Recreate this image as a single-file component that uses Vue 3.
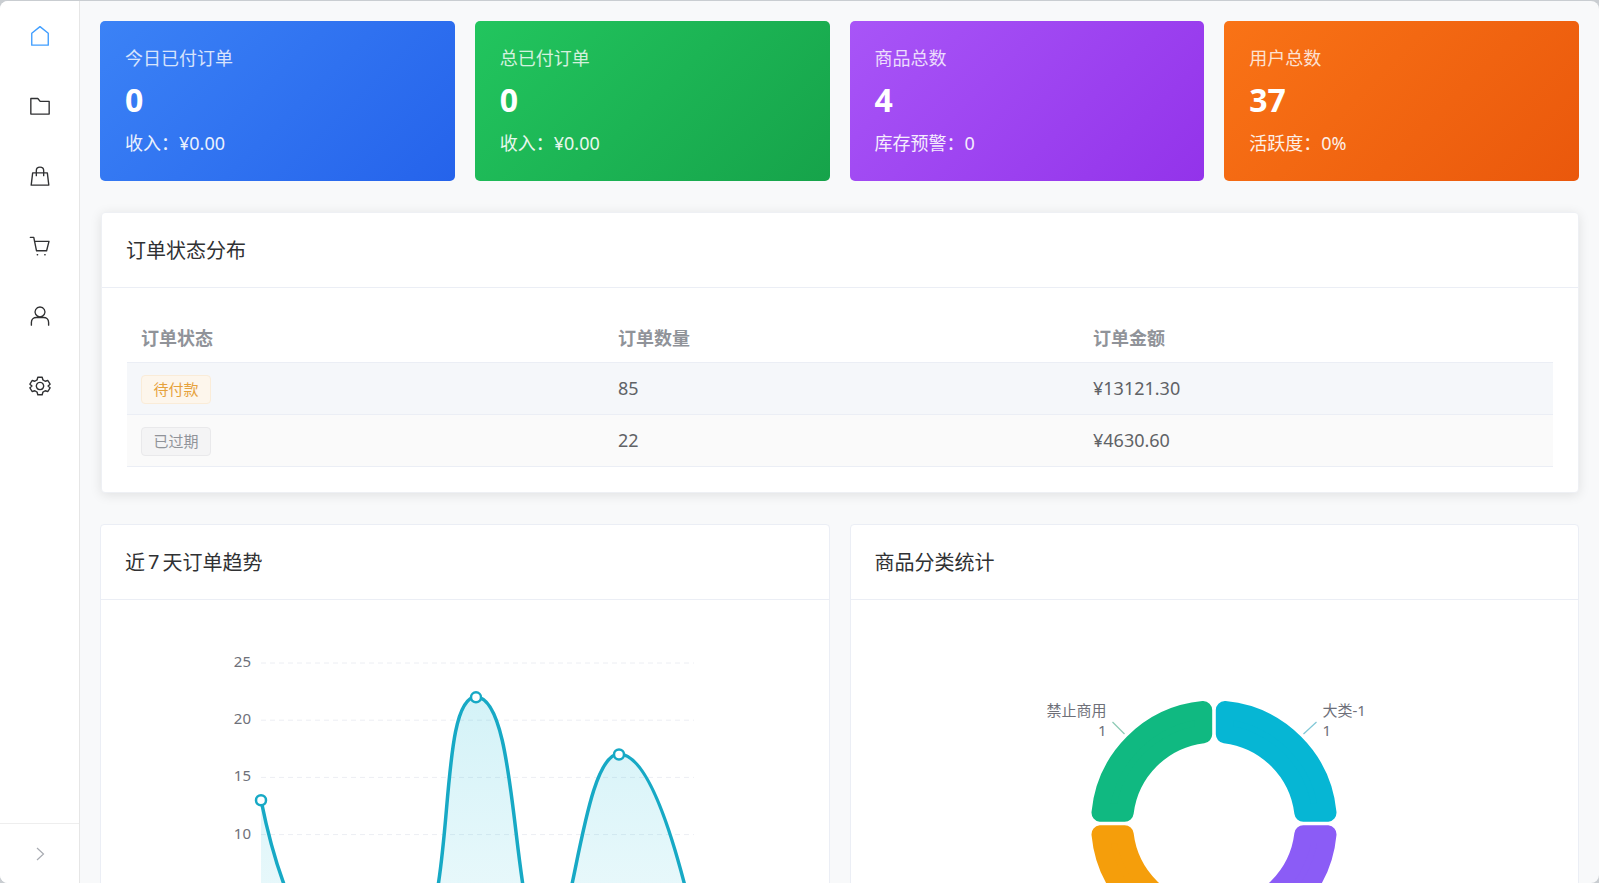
<template>
  <div class="shell">
    <aside class="sidebar">
      <nav class="nav">
        <a v-for="item in navItems" :key="item.name" class="nav-item" :class="{ active: item.active }">
          <svg viewBox="0 0 24 24" class="nav-icon" fill="none" stroke="currentColor" stroke-width="1.5" stroke-linejoin="round" stroke-linecap="round">
            <path v-for="(d, i) in item.paths" :key="i" :d="d" />
          </svg>
        </a>
      </nav>
      <div class="collapse">
        <svg viewBox="0 0 16 16" width="16" height="16" fill="none" stroke="#a8abb2" stroke-width="1.2">
          <path d="M5 2 l6.5 6 -6.5 6" />
        </svg>
      </div>
    </aside>

    <main class="main">
      <section class="stats">
        <div v-for="card in statCards" :key="card.title" class="stat" :class="card.tone">
          <div class="stat-title">{{ card.title }}</div>
          <div class="stat-value">{{ card.value }}</div>
          <div class="stat-sub">{{ card.sub }}</div>
        </div>
      </section>

      <section class="panel panel-shadow">
        <div class="panel-head">订单状态分布</div>
        <div class="panel-body">
          <div class="table">
            <div class="row row-head">
              <div class="cell">订单状态</div>
              <div class="cell">订单数量</div>
              <div class="cell">订单金额</div>
            </div>
            <div v-for="row in orderRows" :key="row.status" class="row" :class="row.rowClass">
              <div class="cell cell-tag"><span class="tag" :class="row.tagClass">{{ row.status }}</span></div>
              <div class="cell">{{ row.count }}</div>
              <div class="cell">{{ row.amount }}</div>
            </div>
          </div>
        </div>
      </section>

      <section class="charts">
        <div class="panel">
          <div class="panel-head">近<span class="head-num">7</span>天订单趋势</div>
          <svg class="chart" viewBox="101 600 727.5 420">
            <defs>
              <linearGradient id="areaFill" gradientUnits="userSpaceOnUse" x1="0" y1="680" x2="0" y2="950">
                <stop offset="0" stop-color="#06b6d4" stop-opacity="0.18" />
                <stop offset="1" stop-color="#06b6d4" stop-opacity="0.07" />
              </linearGradient>
            </defs>
            <g v-for="tick in yTicks" :key="tick.label">
              <line x1="261" x2="694" :y1="tick.y" :y2="tick.y" stroke="#eceef3" stroke-dasharray="5 4" />
              <text x="251" :y="tick.y + 4" text-anchor="end" class="axis-label">{{ tick.label }}</text>
            </g>
            <path :d="trendPath + ' L700 950 L261 950 Z'" fill="url(#areaFill)" />
            <path :d="trendPath" fill="none" stroke="#17a9c5" stroke-width="3.5" />
            <circle v-for="p in trendPoints" :key="p.x" :cx="p.x" :cy="p.y" r="5" fill="#fff" stroke="#17a9c5" stroke-width="2.5" />
          </svg>
        </div>
        <div class="panel">
          <div class="panel-head">商品分类统计</div>
          <svg class="chart" viewBox="850.5 600 727.5 420">
            <path v-for="seg in donutSegments" :key="seg.color" :d="seg.d" :fill="seg.color" :stroke="seg.color" :stroke-width="corner * 2" stroke-linejoin="round" />
            <path d="M1303 734 L1316 722" stroke="#7fc7d6" stroke-width="1.2" fill="none" />
            <path d="M1124 734 L1112 722" stroke="#8ccab5" stroke-width="1.2" fill="none" />
            <text x="1322" y="716" class="pie-label">大类-1</text>
            <text x="1322" y="736" class="pie-label">1</text>
            <text x="1106" y="716" text-anchor="end" class="pie-label">禁止商用</text>
            <text x="1106" y="736" text-anchor="end" class="pie-label">1</text>
          </svg>
        </div>
      </section>
    </main>
  </div>
</template>

<script setup>
const navItems = [
  { name: 'home', active: true, paths: ['M12 1.8 L21 9 V22 H3 V9 Z'] },
  { name: 'folder', paths: ['M2 3.8 H9.6 L12.2 7 H22 V20.8 H2 Z'] },
  { name: 'goods', paths: ['M4 8.6 H20 L21.6 22 H2.4 Z', 'M8 11.6 V6 C8 1 16 1 16 6 V11.6'] },
  { name: 'cart', paths: ['M1.5 2.6 H5.2 L8.2 17.2 H19.2 L21.8 7 H6', 'M9 21.6 h.4', 'M17.2 21.6 h.4'] },
  { name: 'user', paths: ['M12 2.2 a5.4 5.4 0 1 0 .01 0 Z', 'M2.6 22 V19 C2.6 15.6 5.2 13.6 8 13.6 H16 C18.8 13.6 21.4 15.6 21.4 19 V22'] },
  { name: 'setting', paths: [
    'M9.6 2.4 H14.4 L15.2 5.4 L17.6 6.8 L20.6 6 L23 10 L20.8 12 L23 14 L20.6 18 L17.6 17.2 L15.2 18.6 L14.4 21.6 H9.6 L8.8 18.6 L6.4 17.2 L3.4 18 L1 14 L3.2 12 L1 10 L3.4 6 L6.4 6.8 L8.8 5.4 Z',
    'M12 8 a4 4 0 1 0 .01 0 Z'
  ] }
]

const statCards = [
  { title: '今日已付订单', value: '0', sub: '收入\uFF1A¥0.00', tone: 'blue' },
  { title: '总已付订单', value: '0', sub: '收入\uFF1A¥0.00', tone: 'green' },
  { title: '商品总数', value: '4', sub: '库存预警\uFF1A0', tone: 'purple' },
  { title: '用户总数', value: '37', sub: '活跃度\uFF1A0%', tone: 'orange' }
]

const orderRows = [
  { status: '待付款', count: 85, amount: '¥13121.30', tagClass: 'tag-warning', rowClass: 'row-hover' },
  { status: '已过期', count: 22, amount: '¥4630.60', tagClass: 'tag-info', rowClass: 'row-stripe' }
]

// y axis: 25 at 663, one unit is 11.44px
const yOf = v => 663 + (25 - v) * 11.44
const yTicks = [25, 20, 15, 10].map(v => ({ label: v, y: yOf(v) }))

const trendPoints = [
  { x: 261, y: yOf(13) },
  { x: 476, y: yOf(22) },
  { x: 619, y: yOf(17) }
]

const trendPath = [
  'M261 800 C273 860 300 950 333 950',
  'L404 950',
  'C461 950 433 697 476 697',
  'C522 697 510 950 548 950',
  'C572 950 582 754 619 754',
  'C645 754 672 820 700 950'
].join(' ')

// donut: rounded quadrants, drawn inset and stroked with a round join
const cx = 1213.5
const cy = 823.5
const corner = 9
const gap = 1.8
const outer = 123 - corner
const inner = 81 + corner
const d0 = gap + corner

function quadrant(sx, sy) {
  const px = (x, y) => `${(cx + sx * x).toFixed(1)} ${(cy + sy * y).toFixed(1)}`
  const oEnd = Math.sqrt(outer * outer - d0 * d0)
  const iEnd = Math.sqrt(inner * inner - d0 * d0)
  const sweep = sx * sy > 0 ? 0 : 1
  return `M${px(d0, oEnd)} A${outer} ${outer} 0 0 ${sweep} ${px(oEnd, d0)} L${px(iEnd, d0)} A${inner} ${inner} 0 0 ${1 - sweep} ${px(d0, iEnd)} Z`
}

const donutSegments = [
  { color: '#06b6d4', d: quadrant(1, -1) },
  { color: '#8b5cf6', d: quadrant(1, 1) },
  { color: '#f59e0b', d: quadrant(-1, 1) },
  { color: '#10b981', d: quadrant(-1, -1) }
]
</script>

<style>
html, body {
  margin: 0;
  height: 100%;
  overflow: hidden;
  background: #c9cdd1;
}
</style>

<style scoped>
.shell {
  display: flex;
  height: 882px;
  margin-top: 1px;
  overflow: hidden;
  border-radius: 8px;
  background: #f8f9fa;
  font-family: "Noto Sans", "Noto Sans CJK SC", sans-serif;
  color: #606266;
}
.sidebar {
  flex: none;
  width: 79px;
  display: flex;
  flex-direction: column;
  background: #fff;
  border-right: 1px solid #e6e6e6;
}
.nav {
  flex: 1;
}
.nav-item {
  display: flex;
  align-items: center;
  justify-content: center;
  height: 70px;
  color: #303133;
}
.nav-item.active {
  color: #409eff;
}
.nav-icon {
  width: 22px;
  height: 22px;
}
.collapse {
  height: 59px;
  display: flex;
  align-items: center;
  justify-content: center;
  border-top: 1px solid #eeeeee;
}
.main {
  flex: 1;
  min-width: 0;
  padding: 20px 20px 0;
  overflow: hidden;
}
.stats {
  display: grid;
  grid-template-columns: repeat(4, 1fr);
  gap: 20px;
}
.stat {
  height: 160px;
  box-sizing: border-box;
  padding: 25px;
  border-radius: 5px;
  color: #fff;
}
.blue { background: linear-gradient(135deg, #3b82f6, #2563eb); }
.green { background: linear-gradient(135deg, #22c55e, #16a34a); }
.purple { background: linear-gradient(135deg, #a855f7, #9333ea); }
.orange { background: linear-gradient(135deg, #f97316, #ea580c); }
.stat-title {
  font-size: 18px;
  line-height: 24px;
  opacity: 0.8;
}
.stat-value {
  margin-top: 7px;
  font-size: 32px;
  line-height: 46px;
  font-weight: 700;
}
.stat-sub {
  margin-top: 8px;
  font-size: 18px;
  line-height: 24px;
  opacity: 0.9;
}
.panel {
  background: #fff;
  border: 1px solid #ebeef5;
  border-radius: 4px;
  overflow: hidden;
}
.panel-shadow {
  margin: 31px 0 31px 1px;
  border-color: #eef0f4;
  box-shadow: 0 2px 12px rgba(0, 0, 0, 0.1);
}
.panel-head {
  height: 75px;
  box-sizing: border-box;
  padding: 0 24px 2px;
  display: flex;
  align-items: center;
  font-size: 20px;
  color: #303133;
  border-bottom: 1px solid #ebeef5;
}
.head-num {
  margin: 0 3px;
}
.panel-body {
  padding: 25px;
}
.row {
  display: grid;
  grid-template-columns: 477px 475px 1fr;
  height: 52px;
  padding-bottom: 2px;
  align-items: center;
  font-size: 18px;
  border-bottom: 1px solid #ebeef5;
  box-sizing: border-box;
}
.row-head {
  height: 50px;
  font-size: 18px;
  font-weight: 700;
  color: #909399;
}
.row-hover {
  background: #f5f7fa;
}
.row-stripe {
  background: #fafafa;
}
.cell {
  padding: 0 14px;
}
.cell-tag {
  padding-top: 3px;
}
.tag {
  display: inline-block;
  height: 29px;
  line-height: 27px;
  box-sizing: border-box;
  padding: 0 11.5px;
  font-size: 15px;
  border-radius: 4px;
  border: 1px solid;
  vertical-align: middle;
}
.tag-warning {
  background: #fdf6ec;
  border-color: #faecd8;
  color: #e6a23c;
}
.tag-info {
  background: #f4f4f5;
  border-color: #e9e9eb;
  color: #909399;
}
.charts {
  display: grid;
  grid-template-columns: 1fr 1fr;
  gap: 20px;
}
.chart {
  display: block;
  width: 100%;
}
.axis-label {
  font-size: 15px;
  fill: #6e7079;
}
.pie-label {
  font-size: 15px;
  fill: #6e7079;
}
</style>
